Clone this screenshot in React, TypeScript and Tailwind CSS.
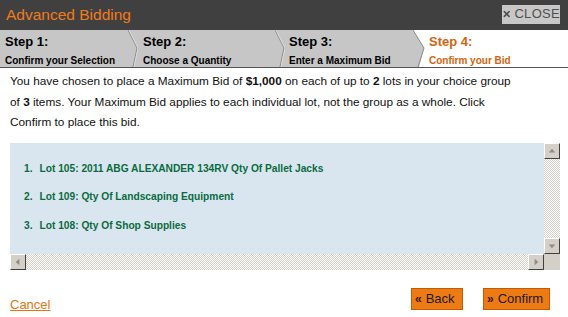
import { X } from 'lucide-react';

const steps = [
  { n: 'Step 1:', label: 'Confirm your Selection', box: 'w-[128px] pl-[5px]', cw: 10 },
  { n: 'Step 2:', label: 'Choose a Quantity', box: 'w-[137px] pl-[5px]', cw: 10 },
  { n: 'Step 3:', label: 'Enter a Maximum Bid', box: 'w-[128px] pl-[4px]', cw: 12 },
];

const lots = [
  'Lot 105: 2011 ABG ALEXANDER 134RV Qty Of Pallet Jacks',
  'Lot 109: Qty Of Landscaping Equipment',
  'Lot 108: Qty Of Shop Supplies',
];

function Chevron({ last, w }: { last?: boolean; w: number }) {
  const tip = w - 1;
  return (
    <svg width={w} height="37" viewBox={`0 0 ${w} 37`} className="shrink-0 block">
      {last && <polygon points={`0,0 ${w},0 ${w},37 6,37 ${tip},18 0,0`} fill="#ffffff" />}
      <polyline points={`0,0 ${tip},18 5,37`} fill="none" stroke="#8a8a8a" strokeWidth="1" />
      {!last && <polyline points={`1,0 ${w},18 6,37`} fill="none" stroke="#e2e2e2" strokeWidth="0.8" />}
    </svg>
  );
}

function ScrollBtn({ dir }: { dir: 'up' | 'down' | 'left' | 'right' }) {
  const pts = {
    up: '4,9 11,9 7.5,5',
    down: '4,6 11,6 7.5,10',
    left: '9,4 9,11 5,7.5',
    right: '6,4 6,11 10,7.5',
  }[dir];
  return (
    <div className="w-[16px] h-[16px] bg-[#d4d0c8] border border-t-white border-l-white border-r-[#404040] border-b-[#404040] shrink-0">
      <svg width="14" height="14" viewBox="0 0 15 15" className="block">
        <polygon points={pts} fill="#8c8c8c" />
      </svg>
    </div>
  );
}

const checker =
  'bg-[repeating-conic-gradient(#d4d0c8_0%_25%,#ffffff_0%_50%)] bg-[length:2px_2px]';

export default function App() {
  return (
    <div className="w-[568px] h-[317px] bg-white font-['Liberation_Sans',Arial,sans-serif] flex flex-col overflow-hidden">
      {/* header */}
      <div className="h-[30px] bg-[#404040] flex items-center justify-between pl-[6px] pr-[8px] shrink-0">
        <span className="text-[15.5px] text-[#f07b1c]">Advanced Bidding</span>
        <button className="h-[19px] w-[58px] bg-[#c8c8c8] text-[#505050] flex items-center justify-center gap-[3px] mt-[-2px]">
          <X size={10} strokeWidth={4} />
          <span className="text-[13px] tracking-[0.3px]">CLOSE</span>
        </button>
      </div>

      {/* steps */}
      <div className="h-[38px] bg-[#c6c6c6] flex border-b border-[#555] shrink-0">
        {steps.map((s, i) => (
          <div key={i} className="flex">
            <div className={`${s.box} flex flex-col text-black font-bold`}>
              <span className="text-[13px] leading-[13px] mt-[5px]">{s.n}</span>
              <span className="text-[10px] leading-[11px] mt-[7px] whitespace-nowrap">{s.label}</span>
            </div>
            <Chevron last={i === 2} w={s.cw} />
          </div>
        ))}
        <div className="flex-1 bg-white pl-[4px] flex flex-col text-[#d4630c] font-bold">
          <span className="text-[13px] leading-[13px] mt-[5px]">Step 4:</span>
          <span className="text-[10px] leading-[11px] mt-[7px] whitespace-nowrap">Confirm your Bid</span>
        </div>
      </div>

      {/* body */}
      <div className="px-[10px] pt-[3px] flex flex-col">
        <p className="w-[506px] text-[11.8px] leading-[20.5px] text-[#111]">
          You have chosen to place a Maximum Bid of <b>$1,000</b> on each of up to <b>2</b> lots in your choice
          group of <b>3</b> items. Your Maximum Bid applies to each individual lot, not the group as a whole.
          Click Confirm to place this bid.
        </p>

        <div className="mt-[10px] w-[550px] h-[127px] flex flex-col">
          <div className="flex flex-1">
            <div className="flex-1 bg-[#d9e6ef] pt-[18px] pl-[14px]">
              <ol className="flex flex-col gap-[12.5px] text-[#0b6b3f] font-bold text-[10.2px] leading-[16px]">
                {lots.map((l, i) => (
                  <li key={i} className="flex gap-[7px] whitespace-nowrap">
                    <span>{i + 1}.</span>
                    <span>{l}</span>
                  </li>
                ))}
              </ol>
            </div>
            <div className={`w-[16px] flex flex-col justify-between ${checker}`}>
              <ScrollBtn dir="up" />
              <ScrollBtn dir="down" />
            </div>
          </div>
          <div className="flex h-[16px]">
            <div className={`flex-1 flex justify-between ${checker}`}>
              <ScrollBtn dir="left" />
              <ScrollBtn dir="right" />
            </div>
            <div className="w-[16px] bg-[#d4d0c8]" />
          </div>
        </div>

        <div className="flex items-end justify-between mt-[18px]">
          <a className="text-[#e8730f] underline text-[13px] leading-[14px] mb-[-2px]">Cancel</a>
          <div className="flex gap-[20px] mr-[8px]">
            <button className="h-[22px] w-[52px] bg-[#ee7a14] border border-[#c25a06] text-[13px] text-[#1a1a1a] flex items-center pl-[3px] gap-[4px]">
              <span className="font-bold text-[12px] text-[#3a1a00]">«</span>Back
            </button>
            <button className="h-[22px] w-[67px] bg-[#ee7a14] border border-[#c25a06] text-[13px] text-[#1a1a1a] flex items-center pl-[3px] gap-[4px]">
              <span className="font-bold text-[12px] text-[#3a1a00]">»</span>Confirm
            </button>
          </div>
        </div>
      </div>
    </div>
  );
}
